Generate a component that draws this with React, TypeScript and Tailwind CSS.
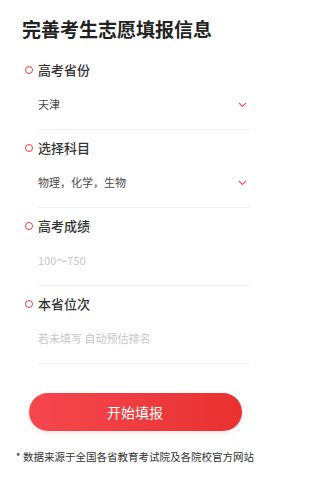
import React from "react";

const Chevron = () => (
  <svg width="9" height="6" viewBox="0 0 9 6" fill="none">
    <polyline points="1,1 4.5,4.5 8,1" stroke="#f25656" strokeWidth="1.1" />
  </svg>
);

type Field = { label: string; value: string; placeholder?: boolean; select?: boolean };

const fields: Field[] = [
  { label: "高考省份", value: "天津", select: true },
  { label: "选择科目", value: "物理，化学，生物", select: true },
  { label: "高考成绩", value: "100～750", placeholder: true },
  { label: "本省位次", value: "若未填写 自动预估排名", placeholder: true },
];

export default function App() {
  return (
    <div
      className="w-[270px] h-[480px] bg-white flex flex-col"
      style={{ fontFamily: '"Noto Sans CJK SC", "Noto Sans", sans-serif' }}
    >
      <div className="pt-4 pl-[22px] text-[19px] leading-[26px] font-bold text-[#222]">
        完善考生志愿填报信息
      </div>
      <div className="flex flex-col mt-[18px]">
        {fields.map((f, i) => (
          <div key={f.label} className={i > 0 ? "mt-2" : ""}>
            <div className="flex items-center h-5 pl-[25px]">
              <span className="w-[8px] h-[8px] rounded-full border-[1.5px] border-[#f23c3c] box-border" />
              <span className="ml-[5px] text-[13px] leading-5 font-medium text-[#333]">{f.label}</span>
            </div>
            <div className="ml-[38px] mr-[19px] h-[49px] border-b border-[#f2f2f2] flex items-center justify-between box-content">
              <span className={"text-[11px] " + (f.placeholder ? "text-[#c8c8c8]" : "text-[#4a4a4a]")}>
                {f.value}
              </span>
              {f.select && (
                <span className="mr-[4px] flex items-center">
                  <Chevron />
                </span>
              )}
            </div>
          </div>
        ))}
      </div>
      <div className="flex justify-center mt-[29px]">
        <button className="w-[213px] h-[38px] rounded-full bg-gradient-to-r from-[#f6474f] to-[#e8302f] text-white text-[14px] shadow-[0_2px_4px_rgba(240,60,60,0.15)]">
          开始填报
        </button>
      </div>
      <div className="mt-[18px] text-center text-[10.5px] leading-4 text-[#333]">
        * 数据来源于全国各省教育考试院及各院校官方网站
      </div>
    </div>
  );
}
